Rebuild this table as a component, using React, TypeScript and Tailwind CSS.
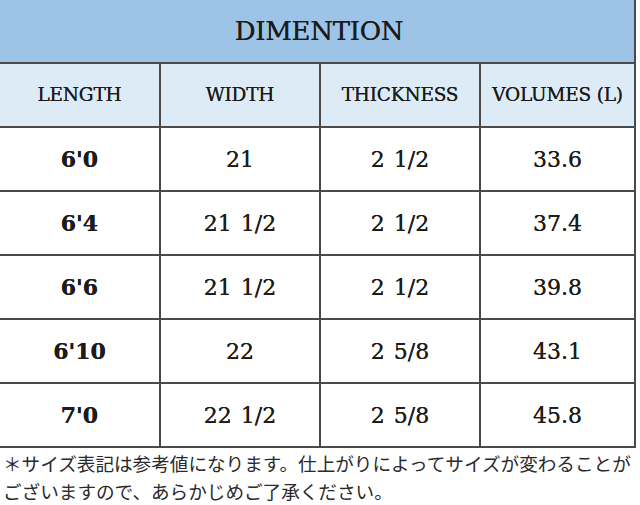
const headers = ["LENGTH", "WIDTH", "THICKNESS", "VOLUMES (L)"];

const rows = [
  ["6'0", "21", "2 1/2", "33.6"],
  ["6'4", "21 1/2", "2 1/2", "37.4"],
  ["6'6", "21 1/2", "2 1/2", "39.8"],
  ["6'10", "22", "2 5/8", "43.1"],
  ["7'0", "22 1/2", "2 5/8", "45.8"],
];

export default function App() {
  return (
    <div className="w-[640px] h-[505px] bg-white overflow-hidden">
      {/* Table: dark background shows through gaps as grid lines */}
      <div
        className="grid w-[636px] grid-cols-[159px_158px_158px_153px] gap-[2px] bg-[#4a4a4a] pr-[2px] pb-[2px] text-[#1c1c1c] [text-shadow:0_0_0.4px_#1c1c1c]"
        style={{ fontFamily: '"DejaVu Serif", serif' }}
      >
        <div className="col-span-4 h-[62px] bg-[#9dc3e6] flex items-center justify-center pl-[4px] text-[26px] tracking-[-0.3px]">
          DIMENTION
        </div>
        {headers.map((h) => (
          <div
            key={h}
            className="h-[62px] bg-[#ddebf7] flex items-center justify-center text-[18.5px] tracking-[-0.2px]"
          >
            {h}
          </div>
        ))}
        {rows.map((r) =>
          r.map((cell, i) => (
            <div
              key={r[0] + i}
              className={
                "h-[62px] bg-white flex items-center justify-center text-[22px] whitespace-pre [word-spacing:2px] " +
                (i === 0 ? "font-bold" : "")
              }
            >
              {cell}
            </div>
          ))
        )}
      </div>

      {/* Note */}
      <p
        className="mt-[1px] pl-[3px] text-[18.6px] leading-[28px] text-[#2a2a2a] whitespace-nowrap"
        style={{ fontFamily: '"Noto Sans CJK JP", sans-serif' }}
      >
        ＊サイズ表記は参考値になります。仕上がりによってサイズが変わることが
        <br />
        ございますので、あらかじめご了承ください。
      </p>
    </div>
  );
}
